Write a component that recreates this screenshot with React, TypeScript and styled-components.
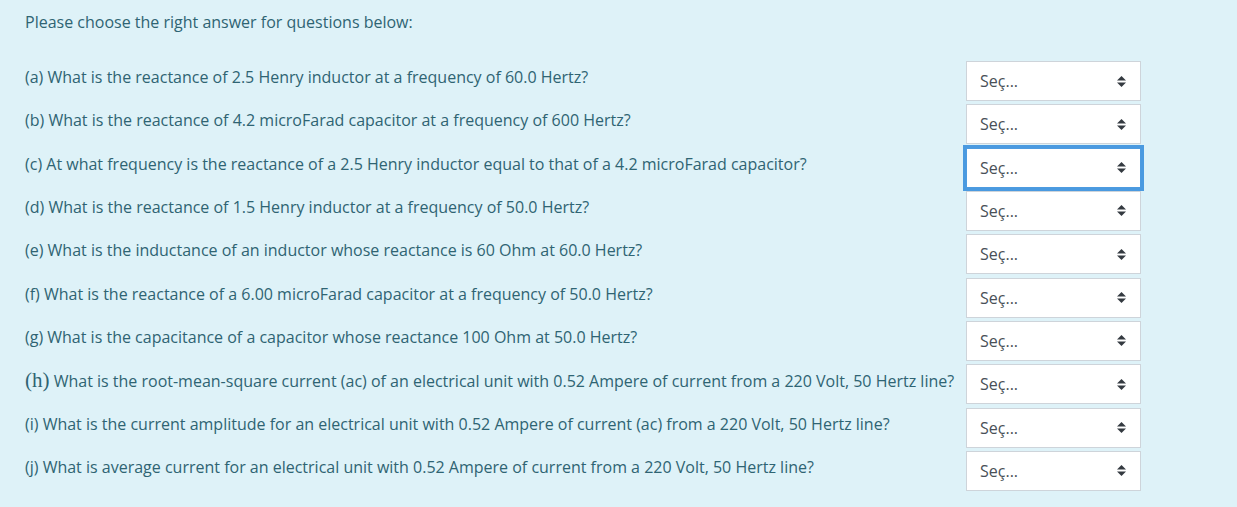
import React from 'react'
import styled, { createGlobalStyle } from 'styled-components'

const GlobalStyle = createGlobalStyle`
  html, body {
    margin: 0;
    padding: 0;
    background: #def2f8;
  }
  body {
    font-family: 'Open Sans', 'Noto Sans', sans-serif;
  }
`

const QUESTIONS = [
  { key: 'a', text: 'What is the reactance of 2.5 Henry inductor at a frequency of 60.0 Hertz?' },
  { key: 'b', text: 'What is the reactance of 4.2 microFarad capacitor at a frequency of 600 Hertz?' },
  { key: 'c', text: 'At what frequency is the reactance of a 2.5 Henry inductor equal to that of a 4.2 microFarad capacitor?', focused: true },
  { key: 'd', text: 'What is the reactance of 1.5 Henry inductor at a frequency of 50.0 Hertz?' },
  { key: 'e', text: 'What is the inductance of an inductor whose reactance is 60 Ohm at 60.0 Hertz?' },
  { key: 'f', text: 'What is the reactance of a 6.00 microFarad capacitor at a frequency of 50.0 Hertz?' },
  { key: 'g', text: 'What is the capacitance of a capacitor whose reactance 100 Ohm at 50.0 Hertz?' },
  { key: 'h', text: 'What is the root-mean-square current (ac) of an electrical unit with 0.52 Ampere of current from a 220 Volt, 50 Hertz line?', serifLabel: true },
  { key: 'i', text: 'What is the current amplitude for an electrical unit with 0.52 Ampere of current (ac) from a 220 Volt, 50 Hertz line?' },
  { key: 'j', text: 'What is average current for an electrical unit with 0.52 Ampere of current from a 220 Volt, 50 Hertz line?' },
]

const Arrows = () => (
  <svg width="9" height="11" viewBox="0 0 9 11">
    <path d="M4.5 0 L9 4.5 L0 4.5 Z" fill="#343a40" />
    <path d="M0 6.5 L9 6.5 L4.5 11 Z" fill="#343a40" />
  </svg>
)

const App = () => {
  return (
    <Formulation>
      <GlobalStyle />
      <Intro>Please choose the right answer for questions below:</Intro>
      <Answers>
        {QUESTIONS.map(q => (
          <Row key={q.key}>
            <Question>
              {q.serifLabel ? <SerifLabel>(h)</SerifLabel> : `(${q.key})`} {q.text}
            </Question>
            <SelectBox $focused={q.focused}>
              <span>Seç...</span>
              <Arrows />
            </SelectBox>
          </Row>
        ))}
      </Answers>
    </Formulation>
  )
}

export default App

const Formulation = styled.div`
  width: 1237px;
  height: 507px;
  box-sizing: border-box;
  padding: 11px 0 0 25px;
  background: #def2f8;
  color: #2f6473;
  font-size: 16px;
`

const Intro = styled.p`
  margin: 0;
  line-height: 22px;
`

const Answers = styled.div`
  display: grid;
  grid-template-columns: 941px 175px;
  grid-auto-rows: 43.33px;
  margin-top: 28px;
`

const Row = styled.div`
  display: contents;
`

const Question = styled.div`
  padding-top: 5px;
  line-height: 22px;
  white-space: nowrap;
`

const SerifLabel = styled.span`
  font-family: 'Liberation Serif', 'DejaVu Serif', serif;
  font-size: 21px;
`

const SelectBox = styled.div<{ $focused?: boolean }>`
  box-sizing: border-box;
  height: 40px;
  display: flex;
  align-items: center;
  justify-content: space-between;
  padding: 0 14px 0 13px;
  background: #fff;
  border: 1px solid ${p => (p.$focused ? '#4d9be0' : '#ced4da')};
  box-shadow: ${p => (p.$focused ? '0 0 0 3px #4a9ae0' : 'none')};
  color: #495057;
  font-size: 16px;
`
